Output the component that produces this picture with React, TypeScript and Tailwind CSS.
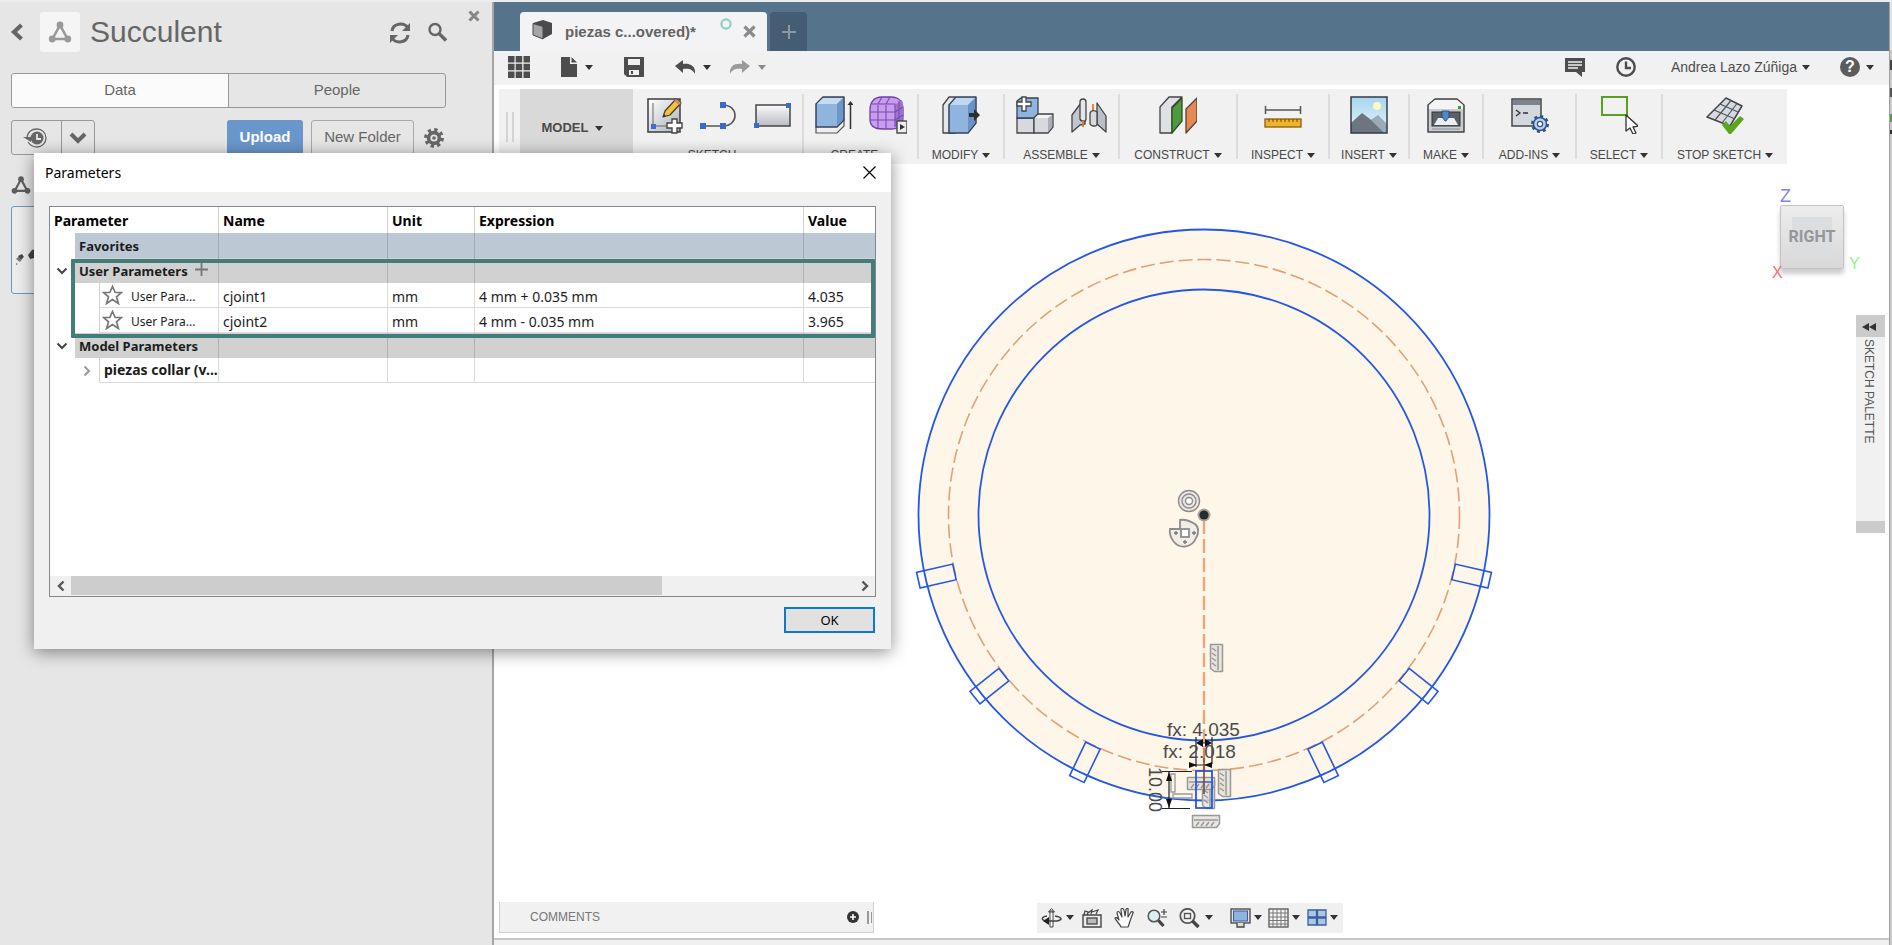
import React from "react";

type IconProps = { children: React.ReactNode; w?: number; h?: number; box?: string; className?: string };

function Svg({ children, w = 20, h = 20, box, className = "" }: IconProps) {
  return (
    <svg width={w} height={h} viewBox={box ?? `0 0 ${w} ${h}`} fill="none" aria-hidden="true" className={`shrink-0 ${className}`}>
      {children}
    </svg>
  );
}

function Caret({ className = "text-[#333]" }: { className?: string }) {
  return (
    <Svg w={8} h={5} className={className}>
      <path d="M0 0h8L4 5z" fill="currentColor" />
    </Svg>
  );
}

function Nodes({ size, className }: { size: number; className: string }) {
  return (
    <Svg w={size} h={size} box="0 0 24 24" className={className}>
      <path d="M12 5 4.500 19h15z" stroke="currentColor" strokeWidth="2.600" />
      <circle cx="12" cy="5" r="3.400" fill="currentColor" />
      <circle cx="4.200" cy="19" r="3.400" fill="currentColor" />
      <circle cx="19.800" cy="19" r="3.400" fill="currentColor" />
    </Svg>
  );
}

/* ---------- Ribbon icons, 38 x 38 ---------- */

function R({ children }: { children: React.ReactNode }) {
  return <Svg w={38} h={38}>{children}</Svg>;
}

function NewSketchIcon() {
  return (
    <R>
      <defs>
        <linearGradient id="sk" x1="0" y1="0" x2="1" y2="1">
          <stop offset="0" stopColor="#ffffff" />
          <stop offset="1" stopColor="#aab0bb" />
        </linearGradient>
      </defs>
      <rect x="3" y="3" width="32" height="33" fill="url(#sk)" stroke="#3c3c3c" strokeWidth="1.500" />
      <path d="M8 7v23h22" stroke="#666" />
      <rect x="6" y="28" width="5" height="5" fill="#3d6fd0" />
      <path d="M18 21l2-6L31 3l5 4-11 12z" fill="#f4c13a" stroke="#4a3b1a" strokeWidth="1.200" strokeLinejoin="round" />
      <path d="M29 5l5 4 2-2-5-4z" fill="#d98a76" />
      <path d="M18 21l1-3 2 2z" fill="#333" />
      <path d="M27 23h5v4h5v5h-5v5h-5v-5h-5v-5h5z" fill="#fff" stroke="#444" strokeWidth="1.400" />
    </R>
  );
}

function LineIcon() {
  return (
    <R>
      <path d="M4 30h20c16 0 16-21 0-21" stroke="#555" strokeWidth="1.600" />
      <rect x="1" y="27" width="6" height="6" fill="#3a6bc9" />
      <rect x="21" y="27" width="6" height="6" fill="#3a6bc9" />
      <rect x="21" y="6" width="6" height="6" fill="#3a6bc9" />
    </R>
  );
}

function RectIcon() {
  return (
    <R>
      <defs>
        <linearGradient id="rc" x1="0" y1="0" x2="0" y2="1">
          <stop offset="0" stopColor="#fafafa" />
          <stop offset="1" stopColor="#b9bcc6" />
        </linearGradient>
      </defs>
      <rect x="3" y="9" width="34" height="21" fill="url(#rc)" stroke="#444" strokeWidth="1.500" />
      <rect x="1" y="27" width="5" height="5" fill="#3a6bc9" />
      <rect x="33" y="7" width="5" height="5" fill="#3a6bc9" />
    </R>
  );
}

function ExtrudeIcon() {
  return (
    <R>
      <path d="M1 31v6h21l7-7v-6z" fill="#eee" stroke="#555" strokeWidth="1.200" />
      <path d="M1 8l7-7h21v23l-7 7H1z" fill="#8fb4dd" stroke="#33435a" strokeWidth="1.500" strokeLinejoin="round" />
      <path d="M2 8l6-6h20l-6 6z" fill="#c7dcf2" />
      <path d="M22 8l6-6v22l-6 6z" fill="#6c97c8" />
      <path d="M35.500 33V7" stroke="#333" strokeWidth="1.500" />
      <path d="M32.500 9l3-4 3 4z" fill="#333" />
    </R>
  );
}

function FormIcon() {
  return (
    <R>
      <path d="M1 14c0-8 4-13 12-13h9c8 0 12 5 12 12v8c0 8-5 12-12 12h-8C5 33 1 30 1 23z" fill="#c89df0" stroke="#6f3fa5" strokeWidth="1.300" />
      <path d="M26 9l7-5c2 5 1 17 0 21l-7 6z" fill="#9f74cf" />
      <path d="M1 16h25M1 24h25M9 9v23M17 9v23M3 8h23v23M26 16l8-5M26 24l8-5M9 8l4-7M17 8l4-7M30 5v22" stroke="#7a4bb0" strokeWidth="1.100" />
      <rect x="28" y="25" width="10" height="12" fill="#eee" stroke="#444" strokeWidth="1.400" />
      <path d="M31 28l5 3-5 3z" fill="#333" />
    </R>
  );
}

function PressPullIcon() {
  return (
    <R>
      <path d="M1 9l6-8h6v36H1z" fill="#e4e6ea" stroke="#444" strokeWidth="1.300" strokeLinejoin="round" />
      <path d="M7 9l7-8h20v26l-8 10H7z" fill="#8fb4dd" stroke="#33435a" strokeWidth="1.500" strokeLinejoin="round" />
      <path d="M8 9l6-7h19l-7 7z" fill="#c0d7f0" />
      <path d="M26 9l7-7v25l-7 9z" fill="#6993c4" />
      <path d="M27 17h5v-4l6 6-6 6v-4h-5z" fill="#2d2d2d" />
    </R>
  );
}

function ComponentIcon() {
  return (
    <R>
      <path d="M1 22h17v15H1z" fill="#d7d9de" stroke="#444" strokeWidth="1.300" />
      <path d="M1 5l4-3h17v16l-4 4H1z" fill="#8fb4dd" stroke="#33435a" strokeWidth="1.300" />
      <path d="M18 22l4-4h15v13l-5 6H18z" fill="#d7d9de" stroke="#444" strokeWidth="1.300" />
      <path d="M19 22l3-3h14l-4 3z" fill="#f4f4f6" />
      <path d="M32 22l4-3v12l-4 5z" fill="#aaaeb8" />
      <path d="M6 1h4v5h5v4h-5v5H6v-5H1V6h5z" fill="#fff" stroke="#444" strokeWidth="1.300" />
    </R>
  );
}

function JointIcon() {
  return (
    <R>
      <path d="M2 19l9-12 4-3v24l-5 1-8 7z" fill="#c2c6ce" stroke="#444" strokeWidth="1.300" strokeLinejoin="round" />
      <path d="M10 6c0-4 6-4 6 0v17c0 3-5 3-6 0z" fill="#e3e5e9" stroke="#444" strokeWidth="1.300" />
      <path d="M13 25v6M23 8v7" stroke="#e8791e" strokeWidth="1.800" />
      <path d="M27 7l9 13v16l-9-8z" fill="#b9bec8" stroke="#444" strokeWidth="1.300" strokeLinejoin="round" />
      <path d="M20 17c1-3 5-3 7-1v13c-2 2-6 1-7-1z" fill="#d7dade" stroke="#444" strokeWidth="1.300" />
    </R>
  );
}

function ConstructIcon() {
  return (
    <R>
      <path d="M1 11L10 1h13L13 11v26H1z" fill="#dfe1e5" stroke="#444" strokeWidth="1.300" strokeLinejoin="round" />
      <path d="M13 12L23 2v23L13 37z" fill="#4f9a3c" stroke="#2f4f2a" strokeWidth="1.300" strokeLinejoin="round" />
      <path d="M27 13L38 2v23L27 37z" fill="#e58a55" stroke="#5a4034" strokeWidth="1.300" strokeLinejoin="round" />
    </R>
  );
}

function InspectIcon() {
  return (
    <R>
      <path d="M1.500 10v8M36.500 10v8M2 14h34" stroke="#555" strokeWidth="1.500" />
      <rect x="1" y="23" width="36" height="8" fill="#f0b429" stroke="#8a5c12" strokeWidth="1.300" />
      <path d="M5 23v3M9 23v3M13 23v3M17 23v3M21 23v3M25 23v3M29 23v3M33 23v3" stroke="#6b4710" />
    </R>
  );
}

function InsertIcon() {
  return (
    <R>
      <defs>
        <linearGradient id="sky" x1="0" y1="0" x2="0" y2="1">
          <stop offset="0" stopColor="#a8d5ef" />
          <stop offset="1" stopColor="#e6f4fa" />
        </linearGradient>
      </defs>
      <rect x="1" y="1" width="36" height="36" fill="url(#sky)" />
      <circle cx="27" cy="10" r="4" fill="#fdf6c8" />
      <path d="M19 25l9-6 9 9v9H19z" fill="#9aabb8" />
      <path d="M1 27l11-10 8 6 14 14H1z" fill="#6e7480" />
      <rect x="1" y="1" width="36" height="36" stroke="#333b45" strokeWidth="1.500" />
    </R>
  );
}

function MakeIcon() {
  return (
    <R>
      <path d="M1 9l7-6h22l7 6v27H1z" fill="#c9ccd1" stroke="#444" strokeWidth="1.500" strokeLinejoin="round" />
      <path d="M2 9l6-5h22l6 5v4H2z" fill="#f3f4f5" />
      <rect x="31" y="10" width="3" height="3" fill="#35a045" />
      <rect x="5" y="16" width="28" height="14" fill="#5c6068" stroke="#333" />
      <path d="M11 22h16l4 7H7z" fill="#eceef1" />
      <path d="M15 15h7v6l-3 4h-1l-3-4z" fill="#4f87c9" stroke="#24466f" strokeWidth=".8" />
      <path d="M5 33h28" stroke="#8a8e96" />
    </R>
  );
}

function AddInsIcon() {
  return (
    <R>
      <rect x="1" y="3" width="29" height="27" fill="#d3d7de" stroke="#444" strokeWidth="1.500" />
      <rect x="2" y="4" width="27" height="5" fill="#7d828c" />
      <path d="M5 14l4 3-4 3M12 17h5" stroke="#333" strokeWidth="1.300" />
      <circle cx="29" cy="28" r="6.500" fill="#b8d0ee" stroke="#2e5288" strokeWidth="1.500" />
      <circle cx="29" cy="28" r="7.800" stroke="#2e5288" strokeWidth="2.400" strokeDasharray="3 3.120" />
      <circle cx="29" cy="28" r="2.600" fill="#fff" stroke="#2e5288" strokeWidth="1.200" />
    </R>
  );
}

function SelectIcon() {
  return (
    <R>
      <rect x="2" y="1" width="25" height="18" stroke="#58a021" strokeWidth="2" />
      <path d="M26 19v16l4-3 3 6 3-1-3-6 5-1z" fill="#fff" stroke="#333" strokeWidth="1.300" strokeLinejoin="round" />
    </R>
  );
}

function StopSketchIcon() {
  return (
    <R>
      <path d="M20 2l16 8-12 20L1 21z" fill="#d5dae4" stroke="#444" strokeWidth="1.500" strokeLinejoin="round" />
      <path d="M25 4.500L9 24M31 7.500L16 27M14 8l18 8M8 14l20 8.500" stroke="#555" strokeWidth="1.200" />
      <path d="M16 29l4-4 4 5 10-10 4 3-13 15h-2z" fill="#5aa61c" />
    </R>
  );
}

const groups = [
  { label: "SKETCH", width: "w-[170px]", icons: [<NewSketchIcon />, <LineIcon />, <RectIcon />] },
  { label: "CREATE", width: "w-[115px]", icons: [<ExtrudeIcon />, <FormIcon />] },
  { label: "MODIFY", width: "w-[86px]", icons: [<PressPullIcon />] },
  { label: "ASSEMBLE", width: "w-[115px]", icons: [<ComponentIcon />, <JointIcon />] },
  { label: "CONSTRUCT", width: "w-[118px]", icons: [<ConstructIcon />] },
  { label: "INSPECT", width: "w-[92px]", icons: [<InspectIcon />] },
  { label: "INSERT", width: "w-[80px]", icons: [<InsertIcon />] },
  { label: "MAKE", width: "w-[74px]", icons: [<MakeIcon />] },
  { label: "ADD-INS", width: "w-[93px]", icons: [<AddInsIcon />] },
  { label: "SELECT", width: "w-[86px]", icons: [<SelectIcon />] },
  { label: "STOP SKETCH", width: "w-[124px]", icons: [<StopSketchIcon />] },
];

function Ribbon() {
  return (
    <div className="ml-[5px] mt-1 flex h-[75px] w-max bg-[#f1f1f1]">
      <div className="flex w-[21px] items-center justify-center gap-1">
        <span className="h-[30px] w-[2px] bg-[#d4d4d4]" />
        <span className="h-[30px] w-[2px] bg-[#d4d4d4]" />
      </div>
      <button className="mr-[1px] flex w-[113px] items-center justify-center gap-[7px] bg-[#d9d9d9] pr-2 pt-[3px] text-[13px] font-bold text-[#4a4a4a]">
        MODEL <Caret />
      </button>
      {groups.map((g, i) => (
        <div key={g.label} className={`${g.width} flex py-[5px]`}>
          <div className="flex flex-1 flex-col items-center pt-[2px]">
            <div className="flex gap-4">
              {g.icons.map((icon, k) => (
                <button key={k} aria-label={`${g.label} ${k + 1}`} className="block">{icon}</button>
              ))}
            </div>
            <button className="mt-3 flex items-center gap-1 whitespace-nowrap text-[12px] leading-[18px] text-[#484848]">
              {g.label} <Caret />
            </button>
          </div>
          {i < groups.length - 1 && <span className="w-[2px] bg-[#dcdcdc]" />}
        </div>
      ))}
    </div>
  );
}

/* ---------- Data panel ---------- */

function DataPanel() {
  return (
    <aside className="w-[494px] shrink-0 border-r-2 border-[#a6a6a6] bg-[#e6e6e6] text-[#666]">
      <div className="flex items-start pl-[10px] pr-[12px] pt-[10px]">
        <button aria-label="Back" className="mt-[11px] text-[#666]">
          <Svg w={14} h={18}><path d="M11.500 2L4 9l7.500 7" stroke="currentColor" strokeWidth="4.200" /></Svg>
        </button>
        <span className="ml-4 flex size-10 items-center justify-center rounded-[3px] bg-[#f5f5f5]">
          <Nodes size={24} className="text-[#999]" />
        </span>
        <h1 className="ml-[10px] flex-1 text-[30px] leading-[40px] text-[#666]">Succulent</h1>
        <button aria-label="Refresh" className="mt-[10px]">
          <Svg w={22} h={22}>
            <path d="M3 9c1-8 12-9 16-3M19 13c-1 8-12 9-16 3" stroke="#666" strokeWidth="3" />
            <path d="M21 1v8h-8zM1 21v-8h8z" fill="#666" />
          </Svg>
        </button>
        <button aria-label="Search" className="ml-4 mr-[21px] mt-[10px]">
          <Svg w={20} h={20}>
            <circle cx="8" cy="7.500" r="5.500" stroke="#666" strokeWidth="2.400" />
            <path d="M12 11.500l7 7" stroke="#666" strokeWidth="3.400" />
          </Svg>
        </button>
        <button aria-label="Close panel" className="-mt-[2px]">
          <Svg w={12} h={12}><path d="M1.500 1.500l9 9m0-9l-9 9" stroke="#858585" strokeWidth="3" /></Svg>
        </button>
      </div>

      <div className="ml-[11px] mr-[46px] mt-[21px] flex h-[35px] overflow-hidden rounded-[3px] border border-[#999] text-[15px]">
        <button className="flex-1 border-r border-[#999] bg-[#fbfbfb]">Data</button>
        <button className="flex-1">People</button>
      </div>

      <div className="ml-[11px] mr-[48px] mt-3 flex h-[35px] items-stretch text-[15px]">
        <div className="flex w-[84px] rounded-[3px] border border-[#999]">
          <button aria-label="History" className="flex flex-1 items-center justify-center border-r border-[#999] pr-1">
            <Svg w={24} h={20}>
              <path d="M4 9C5 4 9 1 14 1s9 4 9 9-4 9-9 9c-4 0-7-2-9-5" stroke="#666" strokeWidth="1.300" />
              <path d="M0 9h8v5z" fill="#666" />
              <circle cx="14" cy="10" r="6.500" fill="#666" />
              <path d="M14 6v5h4" stroke="#e6e6e6" strokeWidth="1.800" />
            </Svg>
          </button>
          <button aria-label="More" className="flex w-8 items-center justify-center">
            <Svg w={18} h={12}><path d="M2 2l7 7 7-7" stroke="#666" strokeWidth="4" /></Svg>
          </button>
        </div>
        <button className="ml-auto w-[76px] rounded-[3px] bg-[#6a97cb] font-bold text-white">Upload</button>
        <button className="ml-2 w-[103px] rounded-[3px] border border-[#a8a8a8]">New Folder</button>
        <button aria-label="Settings" className="ml-[10px]">
          <Svg w={20} h={20}>
            <circle cx="10" cy="10" r="8.200" stroke="#666" strokeWidth="3.400" strokeDasharray="3.220 3.220" />
            <circle cx="10" cy="10" r="5.400" stroke="#666" strokeWidth="3.600" />
            <circle cx="10" cy="10" r="1.800" fill="#666" />
          </Svg>
        </button>
      </div>

      <div className="ml-[11px] mt-[20px]"><Nodes size={20} className="text-[#5e5e5e]" /></div>
      <div className="ml-[11px] mr-[46px] mt-[11px] flex h-[88px] items-center rounded-[3px] border border-[#6a97cb] bg-[#ececec] pt-3">
        <Svg w={26} h={20}>
          <path d="M4 13l3-3 4 2-3 4zM4 17l2 1-2 1z" fill="#777" />
          <path d="M6 10l4-2 2 3-3 2z" fill="#444" />
          <path d="M16 9l4-5 6-2v9l-8 2z" fill="#444" />
        </Svg>
      </div>
    </aside>
  );
}

/* ---------- Document tabs and quick access bar ---------- */

function DocumentTabs() {
  return (
    <div className="flex h-[49px] items-end bg-[#56738c] pl-[26px]">
      <div className="flex h-[39px] w-[247px] items-center rounded-t-[4px] bg-[#f3f3f5] pl-3 pr-[11px]">
        <Svg w={21} h={21} className="-mt-1">
          <path d="M1 4l10-3 9 3v11l-9 5-10-4z" fill="#4a4a4a" />
          <path d="M1 4.500l10 3V20L1 16z" fill="#a5a5a5" stroke="#4a4a4a" />
        </Svg>
        <span className="ml-3 flex-1 whitespace-nowrap pt-[2px] text-[15px] font-bold text-[#636363]">piezas c...overed)*</span>
        <Svg w={12} h={12} className="-mt-4"><circle cx="6" cy="6" r="4.600" stroke="#93cfc0" strokeWidth="2.200" /></Svg>
        <button aria-label="Close tab" className="ml-[11px]">
          <Svg w={13} h={13}><path d="M1.500 1.500l10 10m0-10l-10 10" stroke="#8c8c8c" strokeWidth="3.200" /></Svg>
        </button>
      </div>
      <button aria-label="New tab" className="ml-[3px] flex h-[39px] w-[37px] items-center justify-center rounded-t-[4px] bg-[#455d74]">
        <Svg w={14} h={14}><path d="M7 0v14M0 7h14" stroke="#8d979f" strokeWidth="2" /></Svg>
      </button>
    </div>
  );
}

function QuickBar() {
  return (
    <div className="flex h-[34px] items-center bg-[#f1f1f1] pb-[2px] pl-[14px] pr-[15px] text-[#4d4d4d]">
      <button aria-label="Data panel">
        <Svg w={22} h={22}>
          <path d="M0 0h6.500v6.500H0zM7.700 0h6.500v6.500H7.700zM15.500 0H22v6.500h-6.500zM0 7.700h6.500v6.500H0zM7.700 7.700h6.500v6.500H7.700zM15.500 7.700H22v6.500h-6.500zM0 15.500h6.500V22H0zM7.700 15.500h6.500V22H7.700zM15.500 15.500H22V22h-6.500z" fill="currentColor" />
        </Svg>
      </button>
      <button aria-label="File" className="ml-[31px] flex items-center gap-2">
        <Svg w={16} h={20}><path d="M0 0h9v7h7v13H0zM10.500 0L16 5.500h-5.500z" fill="currentColor" /></Svg>
        <Caret />
      </button>
      <button aria-label="Save" className="ml-[31px]">
        <Svg w={20} h={20}>
          <path d="M0 0h20v20H3l-3-3z" fill="currentColor" />
          <path d="M4 2h12v6H4zM5 13h10v5H5z" fill="#f1f1f1" />
          <path d="M7 14h2v3H7z" fill="currentColor" />
        </Svg>
      </button>
      <button aria-label="Undo" className="ml-[31px] flex items-center gap-2">
        <Svg w={20} h={14}><path d="M0 6l8-6v4c7-1 13 2 12 10-2-4-5-6-12-5v4z" fill="currentColor" /></Svg>
        <Caret />
      </button>
      <button aria-label="Redo" className="ml-[18px] flex items-center gap-2 text-[#9a9a9a]">
        <Svg w={21} h={14}><path d="M21 6l-8-6v4C6 3 0 6 1 14c2-4 5-6 12-5v4z" fill="currentColor" /></Svg>
        <Caret className="text-[#8a8a8a]" />
      </button>
      <button aria-label="Comments" className="ml-auto">
        <Svg w={20} h={19}>
          <path d="M0 0h20v14h-3v5l-6-5H0z" fill="currentColor" />
          <path d="M3 4h14M3 7h14M3 10h10" stroke="#f1f1f1" strokeWidth="1.300" />
        </Svg>
      </button>
      <button aria-label="Job status" className="ml-[31px]">
        <Svg w={20} h={20}>
          <circle cx="10" cy="10" r="8.700" stroke="currentColor" strokeWidth="2.400" />
          <path d="M10 4.500V11h5" stroke="currentColor" strokeWidth="2.400" />
        </Svg>
      </button>
      <button className="ml-[35px] flex items-center gap-[5px] whitespace-nowrap text-[14px] text-[#4d4d4d]">
        Andrea Lazo Zúñiga <Caret />
      </button>
      <button aria-label="Help" className="ml-[30px] flex items-center gap-[6px]">
        <span className="flex size-5 items-center justify-center rounded-full bg-[#5c5c5c] text-[16px] font-bold leading-none text-white">?</span>
        <Caret />
      </button>
    </div>
  );
}

/* ---------- Sketch canvas ---------- */

const SLOT = 360 / 14;

function Glyph({ x, y, turn = 0 }: { x: number; y: number; turn?: number }) {
  return (
    <g transform={`translate(${x} ${y}) rotate(${turn})`} stroke="#999" strokeWidth="1.500" fill="#e2ddd6" fillOpacity=".75">
      <path d="M-13.500-5.500h27v8l-3 4h-24z" strokeLinejoin="round" />
      <path d="M-12-1h24M-10 5l3-4M-5 5l3-4M0 5l3-4M5 5l3-4" />
    </g>
  );
}

function Sketch() {
  const blue = "#2457e6";
  return (
    <svg viewBox="904 214 600 620" width="600" height="620" className="absolute left-[410px] top-[51px]" fill="none" role="img" aria-label="Ring sketch">
      <circle cx="1204" cy="514" r="285.500" fill="#fff6ea" stroke={blue} strokeWidth="1.800" />
      <circle cx="1204" cy="514" r="225.500" stroke={blue} strokeWidth="1.800" />
      <circle cx="1204" cy="514" r="255.500" stroke="#e2a074" strokeWidth="1.600" strokeDasharray="14 5" />
      <path d="M1204 519v250" stroke="#e6a87c" strokeWidth="2.400" strokeDasharray="14 5" />
      {[-3, -2, -1, 1, 2, 3].map((k) => (
        <rect key={k} x="1196" y="770" width="16" height="37" stroke={blue} strokeWidth="1.600" transform={`rotate(${k * SLOT} 1204 514)`} />
      ))}

      <g stroke="#8d8d8d" strokeWidth="1.400">
        <circle cx="1189" cy="500" r="10.500" fill="#ece7e0" />
        <circle cx="1189" cy="500" r="7" />
        <circle cx="1189" cy="500" r="3.500" fill="#fff" />
        <path d="M1180 519c5-1 10 1 15 4 4 3 4 10 1 14-4 10-16 11-22 4-4-5-5-8-4-13h10z" fill="#f1ece5" strokeWidth="1.800" />
        <rect x="1181" y="528" width="8" height="8" fill="#fff" strokeWidth="1.800" />
      </g>
      <path d="M1174 532h4M1176 530v4M1192 532h4M1194 530v4M1183 541h4M1185 539v4" stroke="#777" strokeWidth="1.300" />
      <circle cx="1204" cy="514" r="6.500" fill="#aaa59d" />
      <circle cx="1204" cy="514" r="4.600" fill="#262b2e" />

      <Glyph x={1217} y={657} turn={90} />
      <Glyph x={1225} y={782} turn={90} />
      <Glyph x={1209} y={794} turn={90} />
      <Glyph x={1201} y={782} />
      <Glyph x={1206} y={820} />
      <path d="M1171 773h4v18h-4zM1173 793h19v4h-19z" stroke="#9a9a9a" strokeWidth="1.300" />

      <rect x="1196" y="770" width="16" height="37" stroke={blue} strokeWidth="1.800" />
      <path d="M1196 781h16" stroke={blue} />
      <g stroke="#222" strokeWidth="1.200">
        <path d="M1196 736v30M1212 736v27M1199 742h10M1204 757v36M1189 764h22M1169 771v36M1162 770.500h30M1162 807.500h28" />
      </g>
      <path d="M1196 742l7-4v8zM1212 742l-7-4v8zM1197 764l-8-3v6zM1204 764l8-3v6zM1169 771l3 9h-6zM1169 807l3-9h-6z" fill="#111" />
      <path d="M1204 745v45" stroke="#b5683a" strokeWidth="1.600" opacity=".6" />
      <g fill="#4a4a4a" className="font-['Liberation_Sans',Arial,sans-serif]" fontSize="19">
        <text x="1167" y="735">fx: 4.035</text>
        <text x="1163" y="757">fx: 2.018</text>
        <text x="0" y="0" fontSize="18" transform="translate(1149 766) rotate(90)">10.00</text>
      </g>
    </svg>
  );
}

function ViewCube() {
  return (
    <div className="absolute right-[28px] top-[23px] flex w-[90px] flex-col text-[16px] leading-[18px]">
      <span className="ml-[9px] text-[18px] text-[#8282f5]">Z</span>
      <div className="ml-[9px] flex items-end gap-[5px]">
        <button className="flex size-16 items-center justify-center rounded-[2px] border border-[#c4c4c4] bg-linear-to-b from-[#ededed] to-[#d8d8d8] shadow-[0_5px_5px_rgba(0,0,0,0.2)]">
          <span className="flex size-10 items-center justify-center bg-[#dcdddf] font-['Liberation_Sans_Narrow','Roboto',sans-serif] text-[16px] font-bold text-[#94979a]">RIGHT</span>
        </button>
        <span className="text-[#8df58d] leading-[10px]">Y</span>
      </div>
      <span className="-mt-[5px] ml-[1px] text-[#f47070]">X</span>
    </div>
  );
}

function SketchPalette() {
  return (
    <div className="absolute right-1 top-[151px] flex h-[218px] w-[29px] flex-col items-center bg-[#f1f1f1] text-[#555]">
      <button aria-label="Expand palette" className="flex h-[22px] w-full items-center justify-center bg-[#cbcbcb] pr-1 pt-[2px]">
        <Svg w={14} h={8}><path d="M7 0v8L0 4zM14 0v8L7 4z" fill="#333" /></Svg>
      </button>
      <span className="mr-1 mt-[2px] flex-1 whitespace-nowrap text-[12px] [writing-mode:vertical-rl]">SKETCH PALETTE</span>
      <span className="h-3 w-full bg-[#cbcbcb]" />
    </div>
  );
}

function CommentsBar() {
  return (
    <div className="flex h-[31px] w-[375px] items-center border border-t-0 border-[#cfcfcf] bg-[#f1f1f1] pl-[30px] text-[12px] text-[#777]">
      <span className="flex-1">COMMENTS</span>
      <button aria-label="Add comment">
        <Svg w={12} h={12}>
          <circle cx="6" cy="6" r="6" fill="#333" />
          <path d="M6 3v6M3 6h6" stroke="#fff" strokeWidth="1.600" />
        </Svg>
      </button>
      <span className="ml-2 h-[13px] w-[2px] bg-[#999]" />
      <span className="ml-[2px] mr-[1px] h-[11px] w-px bg-[#999]" />
    </div>
  );
}

function NavBar() {
  return (
    <div className="flex h-[30px] w-[306px] items-center bg-[#f0f0f0] pl-1">
      <button aria-label="Orbit" className="flex items-center gap-[4px]">
        <Svg w={21} h={20}>
          <path d="M9 3h3v16H9zM7.500 4l3-3.500 3 3.500z" fill="#fff" stroke="#444" />
          <path d="M6 8C0 9 0 12 5 13l11 0c6-1 5-4-2-5" stroke="#444" strokeWidth="1.500" />
          <path d="M8 9v8l-6-4z" fill="#222" />
        </Svg>
        <Caret />
      </button>
      <button aria-label="Look at" className="ml-[8px]">
        <Svg w={20} h={20}>
          <path d="M1 7h18v12H1z" fill="#eee" stroke="#444" strokeWidth="1.400" />
          <path d="M2 7l1-4 3 1-1 3M6 5l4-3-1 4M10 4l6-2-2 4" stroke="#444" strokeWidth="1.200" />
          <rect x="5" y="10" width="10" height="6" fill="#bbb" stroke="#444" strokeWidth="1.300" />
        </Svg>
      </button>
      <button aria-label="Pan" className="ml-[12px]">
        <Svg w={22} h={20}>
          <path d="M7 19c-1-3-5-6-6-9 1-1 3 0 4 2L3 5c0-2 2-2 3 0l2 4-1-7c0-2 2-2 3 0l1 6 1-6c0-2 3-2 2 0v7l3-5c1-1 3 0 2 1l-3 8c-1 3-1 4-2 6z" fill="#fff" stroke="#444" strokeWidth="1.200" strokeLinejoin="round" />
        </Svg>
      </button>
      <button aria-label="Zoom" className="ml-[11px]">
        <Svg w={20} h={20}>
          <circle cx="7" cy="8" r="5.800" fill="#d8eef0" stroke="#555" strokeWidth="1.500" />
          <path d="M11.500 12.500l5 5.500" stroke="#444" strokeWidth="3.200" />
          <path d="M17 1v6M14 4h6M14 9h6" stroke="#444" strokeWidth="1.200" />
        </Svg>
      </button>
      <button aria-label="Fit" className="ml-[12px] flex items-center gap-[5px]">
        <Svg w={21} h={20}>
          <circle cx="8.500" cy="8" r="7.200" fill="#f4f4f4" stroke="#555" strokeWidth="1.800" />
          <rect x="5.500" y="5.500" width="6" height="5" stroke="#555" strokeWidth="1.400" />
          <path d="M13.500 13l6 6" stroke="#444" strokeWidth="3.400" />
        </Svg>
        <Caret />
      </button>
      <button aria-label="Display settings" className="ml-[17px] flex items-center gap-[3px]">
        <Svg w={21} h={20}>
          <rect x="1" y="1" width="19" height="14" fill="#e2e2e2" stroke="#444" strokeWidth="1.300" />
          <rect x="3.500" y="3" width="14" height="10" fill="#8db3e2" stroke="#3c5f94" />
          <path d="M7 15v4h7v-4" fill="#ddd" stroke="#444" strokeWidth="1.300" />
        </Svg>
        <Caret />
      </button>
      <button aria-label="Grid settings" className="ml-[6px] flex items-center gap-[3px]">
        <Svg w={21} h={20}>
          <rect x="1" y="1" width="19" height="18" fill="#f4f4f4" stroke="#555" strokeWidth="1.300" />
          <path d="M5 1v18M9 1v18M13 1v18M17 1v18M1 5h19M1 9h19M1 12.500h19M1 16h19" stroke="#777" />
        </Svg>
        <Caret />
      </button>
      <button aria-label="Viewports" className="ml-[7px] flex items-center gap-[3px]">
        <Svg w={20} h={17}>
          <path d="M1 1h8.500v7H1zM10.500 1H19v7h-8.500zM1 9h8.500v7H1zM10.500 9H19v7h-8.500z" fill="#a9c6ec" stroke="#3c5f94" strokeWidth="1.300" />
        </Svg>
        <Caret />
      </button>
    </div>
  );
}

/* ---------- Parameters dialog ---------- */

const line = "border-r border-[#d0d0d0]";

function Chevron({ open }: { open: boolean }) {
  return open ? (
    <Svg w={12} h={8}><path d="M1.500 1.500L6 6l4.500-4.500" stroke="#444" strokeWidth="2" /></Svg>
  ) : (
    <Svg w={8} h={12}><path d="M1.500 1.500L6 6l-4.500 4.500" stroke="#999" strokeWidth="2" /></Svg>
  );
}

function BandRow({ label, tone, chevron, add }: { label: string; tone: string; chevron?: boolean; add?: boolean }) {
  const edge = "border-r border-black/15";
  return (
    <tr className="h-[25px]">
      <td className="bg-white pl-[6px]">{chevron && <button aria-label={`Collapse ${label}`} className="block"><Chevron open /></button>}</td>
      <td colSpan={2} className={`${tone} ${edge} whitespace-nowrap pl-1 text-[13px] font-bold`}>
        <span className="flex items-center gap-[7px]">
          {label}
          {add && (
            <button aria-label="Add user parameter" className="-mt-[2px]">
              <Svg w={13} h={13}><path d="M6.500 0v13M0 6.500h13" stroke="#777" strokeWidth="1.800" /></Svg>
            </button>
          )}
        </span>
      </td>
      <td className={`${tone} ${edge}`} />
      <td className={`${tone} ${edge}`} />
      <td className={`${tone} ${edge}`} />
      <td className={tone} />
    </tr>
  );
}

const userParams = [
  { name: "cjoint1", unit: "mm", expr: "4 mm + 0.035 mm", value: "4.035" },
  { name: "cjoint2", unit: "mm", expr: "4 mm - 0.035 mm", value: "3.965" },
];

function ParametersDialog() {
  const cell = "border-b border-[#dcdcdc] pl-1";
  const text = "pt-[3px]";
  return (
    <section role="dialog" aria-label="Parameters" className="absolute left-[34px] top-[153px] w-[857px] bg-[#f0f0f0] pb-4 font-['Noto_Sans','Open_Sans',sans-serif] text-black shadow-[0_3px_16px_rgba(0,0,0,0.45)]">
      <header className="flex h-[39px] items-center justify-between bg-white pl-[11px] pr-[15px]">
        <h2 className="text-[14px]">Parameters</h2>
        <button aria-label="Close"><Svg w={13} h={13}><path d="M.5.5l12 12m0-12l-12 12" stroke="#000" strokeWidth="1.200" /></Svg></button>
      </header>

      <div className="relative mx-[15px] mt-[14px] flex h-[391px] flex-col border border-[#828790] bg-white">
        <table className="w-full table-fixed border-separate border-spacing-0 text-left text-[14px] leading-[20px] text-[#1c1c1c]">
          <colgroup>
            <col className="w-[25px]" />
            <col className="w-[25px]" />
            <col className="w-[119px]" />
            <col className="w-[169px]" />
            <col className="w-[87px]" />
            <col className="w-[329px]" />
            <col />
          </colgroup>
          <thead>
            <tr className="h-[26px] text-black">
              <th colSpan={3} className={`${line} pl-1 pt-[2px]`}>Parameter</th>
              <th className={`${line} pl-1 pt-[2px]`}>Name</th>
              <th className={`${line} pl-1 pt-[2px]`}>Unit</th>
              <th className={`${line} pl-1 pt-[2px]`}>Expression</th>
              <th className="pl-1 pt-[2px]">Value</th>
            </tr>
          </thead>
          <tbody>
            <BandRow label="Favorites" tone="bg-[#bcc9d5]" />
            <BandRow label="User Parameters" tone="bg-[#d1d1d1]" chevron add />
            {userParams.map((p) => (
              <tr key={p.name} className="h-[25px]">
                <td />
                <td className={line} />
                <td className={`${cell} ${line} whitespace-nowrap pl-[2px] text-[12px]`}>
                  <span className="flex items-center gap-2">
                    <button aria-label={`Favorite ${p.name}`}>
                      <Svg w={21} h={20}>
                        <path d="M10.500 1.500l2.700 6h6.300l-5 4.300 1.900 6.700-5.900-4-5.900 4 1.900-6.700-5-4.300h6.300z" stroke="#777" strokeWidth="1.700" />
                      </Svg>
                    </button>
                    <span className={text}>User Para...</span>
                  </span>
                </td>
                <td className={`${cell} ${line} ${text}`}>{p.name}</td>
                <td className={`${cell} ${line} ${text}`}>{p.unit}</td>
                <td className={`${cell} ${line} ${text}`}>{p.expr}</td>
                <td className={`${cell} ${text}`}>{p.value}</td>
              </tr>
            ))}
            <BandRow label="Model Parameters" tone="bg-[#d1d1d1]" chevron />
            <tr className="h-[25px]">
              <td />
              <td className={`${line} pl-2`}><button aria-label="Expand piezas collar" className="block"><Chevron open={false} /></button></td>
              <td className={`${cell} ${line} whitespace-nowrap font-bold`}>piezas collar (v...</td>
              <td className={`${cell} ${line}`} />
              <td className={`${cell} ${line}`} />
              <td className={`${cell} ${line}`} />
              <td className={cell} />
            </tr>
          </tbody>
        </table>
        <div className="pointer-events-none absolute left-[21px] right-0 top-[52px] h-[79px] rounded-[1px] border-4 border-[#437c78]" />

        <div className="mt-auto flex h-[20px] items-stretch bg-[#f0f0f0]">
          <button aria-label="Scroll left" className="flex w-[21px] items-center justify-center">
            <Svg w={8} h={12}><path d="M6.500 1.500L2 6l4.500 4.500" stroke="#555" strokeWidth="2.400" /></Svg>
          </button>
          <div className="flex-1"><div className="h-[19px] w-[75.500%] bg-[#cdcdcd]" /></div>
          <button aria-label="Scroll right" className="flex w-[21px] items-center justify-center">
            <Svg w={8} h={12}><path d="M1.500 1.500L6 6l-4.500 4.500" stroke="#555" strokeWidth="2.400" /></Svg>
          </button>
        </div>
      </div>

      <div className="mr-[16px] mt-[10px] flex justify-end">
        <button className="h-[26px] w-[91px] border-2 border-[#1177cc] bg-[#e1e1e1] text-[13px] leading-none text-black">OK</button>
      </div>
    </section>
  );
}

export default function App() {
  return (
    <div className="relative flex min-h-screen overflow-hidden bg-[#ededed] pt-[2px] font-['Liberation_Sans',Arial,sans-serif]">
      <DataPanel />
      <main className="flex min-w-0 flex-1 flex-col border-r border-[#a0a0a0] bg-white">
        <DocumentTabs />
        <QuickBar />
        <Ribbon />
        <div className="relative flex min-h-0 flex-1 flex-col justify-end">
          <Sketch />
          <ViewCube />
          <SketchPalette />
          <div className="mb-[5px] ml-[5px] flex items-center gap-[163px]">
            <CommentsBar />
            <NavBar />
          </div>
        </div>
        <footer className="h-[7px] border-t-2 border-[#c8c8c8] bg-[#f0f0f0]" />
      </main>
      <div className="flex w-[2px] flex-col bg-[#c9c9c9]">
        <span className="h-[48px] bg-[#e4e4e4]" />
        <span className="mt-[10px] h-[10px] bg-[#444]" />
        <span className="mt-[18px] h-[9px] bg-[#555]" />
        <span className="mt-[17px] h-[8px] bg-[#5a9a5a]" />
        <span className="mt-[8px] h-[4px] bg-[#333]" />
      </div>
      <ParametersDialog />
    </div>
  );
}
